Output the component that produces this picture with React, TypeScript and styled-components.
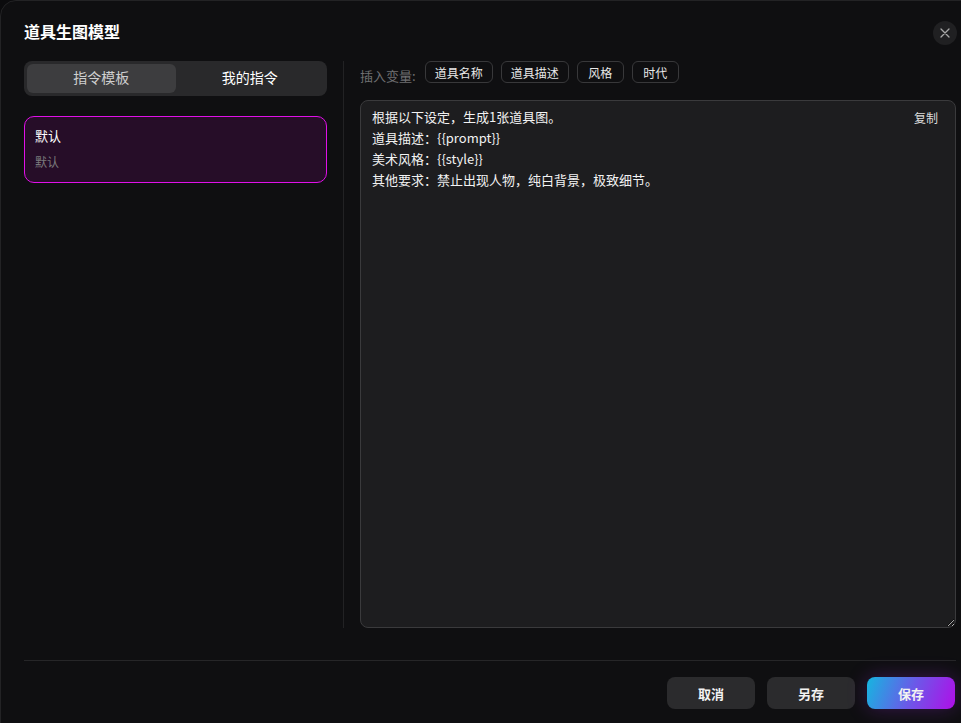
import * as React from "react";
import styled, { createGlobalStyle } from "styled-components";

const Global = createGlobalStyle`
  html, body {
    margin: 0;
    padding: 0;
    background: #0b0b0d;
    overflow: hidden;
  }
  * { box-sizing: border-box; }
`;

const FONT = `"Noto Sans CJK SC", "Noto Sans", sans-serif`;

const variables = ["道具名称", "道具描述", "风格", "时代"];

const promptText = `根据以下设定，生成1张道具图。
道具描述：{{prompt}}
美术风格：{{style}}
其他要求：禁止出现人物，纯白背景，极致细节。`;

export default function App() {
  const [tab, setTab] = React.useState(0);
  return (
    <>
      <Global />
      <Modal>
        <Header>
          <Title>道具生图模型</Title>
          <CloseButton aria-label="关闭">
            <svg width="12" height="12" viewBox="0 0 12 12">
              <path d="M2 2 L10 10 M10 2 L2 10" stroke="#a8a8a8" strokeWidth="1.3" strokeLinecap="round" />
            </svg>
          </CloseButton>
        </Header>
        <Body>
          <LeftColumn>
            <Tabs>
              <Tab $active={tab === 0} onClick={() => setTab(0)}>指令模板</Tab>
              <Tab $active={tab === 1} onClick={() => setTab(1)}>我的指令</Tab>
            </Tabs>
            <TemplateCard>
              <CardTitle>默认</CardTitle>
              <CardSub>默认</CardSub>
            </TemplateCard>
          </LeftColumn>
          <Divider />
          <RightColumn>
            <VarRow>
              <VarLabel>插入变量:</VarLabel>
              {variables.map((v) => (
                <VarTag key={v}>{v}</VarTag>
              ))}
            </VarRow>
            <EditorBox>
              <CopyButton>复制</CopyButton>
              <Editor defaultValue={promptText} spellCheck={false} />
            </EditorBox>
          </RightColumn>
        </Body>
        <Footer>
          <Button>取消</Button>
          <Button>另存</Button>
          <Button $primary>保存</Button>
        </Footer>
      </Modal>
    </>
  );
}

const Modal = styled.div`
  width: 981px;
  height: 740px;
  background: #0f0f11;
  border: 1px solid #232325;
  border-radius: 16px;
  display: flex;
  flex-direction: column;
  padding: 0 24px 0 23px;
  font-family: ${FONT};
  color: #fff;
`;

const Header = styled.div`
  display: flex;
  align-items: center;
  justify-content: space-between;
  height: 60px;
  padding-top: 2px;
  margin-right: 1px;
`;

const Title = styled.div`
  font-size: 16px;
  font-weight: 700;
  color: #fff;
  margin-top: -2px;
`;

const CloseButton = styled.button`
  width: 24px;
  height: 24px;
  border-radius: 50%;
  border: none;
  background: #202022;
  display: flex;
  align-items: center;
  justify-content: center;
  padding: 0;
  margin-right: -2px;
  margin-top: 2px;
  cursor: pointer;
`;

const Body = styled.div`
  display: flex;
  height: 567px;
`;

const LeftColumn = styled.div`
  width: 303px;
  display: flex;
  flex-direction: column;
  gap: 20px;
`;

const Tabs = styled.div`
  display: flex;
  height: 35px;
  padding: 3px;
  border-radius: 8px;
  background: #29292b;
`;

const Tab = styled.div<{ $active?: boolean }>`
  flex: 1;
  display: flex;
  align-items: center;
  justify-content: center;
  border-radius: 6px;
  font-size: 14px;
  padding-bottom: 3px;
  cursor: pointer;
  background: ${(p) => (p.$active ? "#3d3d3f" : "transparent")};
  color: ${(p) => (p.$active ? "#cfcfcf" : "#ffffff")};
`;

const TemplateCard = styled.div`
  height: 67px;
  border: 1px solid #e010e8;
  border-radius: 10px;
  background: #260d28;
  padding: 10px 10px;
  display: flex;
  flex-direction: column;
  gap: 8px;
`;

const CardTitle = styled.div`
  font-size: 13px;
  color: #fff;
  line-height: 18px;
`;

const CardSub = styled.div`
  font-size: 12px;
  color: #7a7a7c;
  line-height: 18px;
`;

const Divider = styled.div`
  width: 1px;
  background: #222224;
  margin: 0 16px;
`;

const RightColumn = styled.div`
  flex: 1;
  display: flex;
  flex-direction: column;
  gap: 17px;
  min-width: 0;
`;

const VarRow = styled.div`
  display: flex;
  align-items: center;
  gap: 8px;
  height: 22px;
`;

const VarLabel = styled.span`
  font-size: 13px;
  color: #6f6f72;
  margin-top: 6px;
  margin-right: 1px;
`;

const VarTag = styled.span`
  height: 22px;
  min-width: 47px;
  padding: 0 9px;
  display: flex;
  align-items: center;
  justify-content: center;
  border: 1px solid #38383a;
  border-radius: 6px;
  font-size: 12px;
  color: #e8e8e8;
`;

const EditorBox = styled.div`
  position: relative;
  flex: 1;
  display: flex;
  border: 1px solid #3a3a3c;
  border-radius: 8px;
  background: #1d1d1f;
`;

const CopyButton = styled.span`
  position: absolute;
  top: 8px;
  right: 17px;
  font-size: 12px;
  color: #dcdcdc;
  cursor: pointer;
`;

const Editor = styled.textarea`
  flex: 1;
  background: transparent;
  border: none;
  outline: none;
  resize: both;
  color: #f2f2f2;
  font-family: ${FONT};
  font-size: 13px;
  line-height: 21px;
  padding: 5px 60px 6px 11px;
  border-radius: 8px;
`;

const Footer = styled.div`
  display: flex;
  justify-content: flex-end;
  gap: 12px;
  margin-top: 32px;
  padding-top: 16px;
  border-top: 1px solid #262628;
  padding-right: 1px;
`;

const Button = styled.button<{ $primary?: boolean }>`
  width: 88px;
  height: 32px;
  border: none;
  border-radius: 8px;
  font-family: ${FONT};
  font-size: 13px;
  font-weight: 600;
  color: #f2f2f2;
  cursor: pointer;
  background: ${(p) =>
    p.$primary ? "linear-gradient(110deg, #15b6e0 0%, #6a5ae8 50%, #b00ee8 100%)" : "#2b2b2d"};
  box-shadow: ${(p) => (p.$primary ? "0 0 20px rgba(150, 40, 220, 0.3)" : "none")};
`;
